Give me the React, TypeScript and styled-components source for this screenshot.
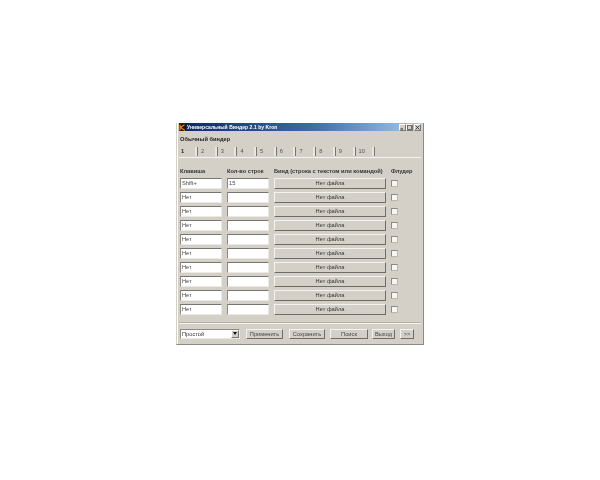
import React from 'react';
import styled, { createGlobalStyle } from 'styled-components';

const Global = createGlobalStyle`
  html, body { margin: 0; height: 100%; background: #fff; }
  #root { height: 100%; }
`;

const Desktop = styled.div`
  width: 600px;
  height: 480px;
  padding: 123px 0 0 176px;
  box-sizing: border-box;
  overflow: hidden;
`;

const Win = styled.div`
  width: 248px;
  height: 222px;
  box-sizing: border-box;
  background: #d4d0c8;
  border: 1px solid #8c8a84;
  border-top: 0;
  border-left-color: #d4d0c8;
  box-shadow: inset 1px 0 0 #fff;
  padding: 0 2px 2px 2px;
  display: flex;
  flex-direction: column;
  font-family: 'Liberation Sans', Arial, sans-serif;
  font-size: 5.7px;
  color: #222;
  filter: blur(0.4px);
`;

const TitleBar = styled.div`
  height: 8px;
  flex: none;
  background: linear-gradient(90deg, #0a246a 0%, #3a6ea5 55%, #a6caf0 100%);
  display: flex;
  align-items: center;
  color: #fff;
  font-weight: bold;
  font-size: 5px;
  padding: 0;
  gap: 1px;
`;

const TitleText = styled.span`
  flex: 1;
  white-space: nowrap;
  letter-spacing: 0.05px;
`;

const CaptionBtn = styled.span<{ $gap?: boolean }>`
  width: 7px;
  height: 7px;
  box-sizing: border-box;
  background: #d4d0c8;
  border: 1px solid #777;
  border-top-color: #fff;
  border-left-color: #fff;
  margin-left: ${(p) => (p.$gap ? '1px' : '0')};
  display: flex;
  align-items: center;
  justify-content: center;
  flex: none;
`;

const Captions = styled.div`
  display: flex;
`;

const GroupTitle = styled.div`
  font-weight: bold;
  height: 7px;
  line-height: 7px;
  margin: 5px 0 0 1px;
  flex: none;
`;

const Tabs = styled.div`
  display: flex;
  margin: 4px 0 0 0;
  height: 10px;
  flex: none;
`;

const Tab = styled.div<{ $active?: boolean }>`
  width: ${(p) => (p.$active ? '19px' : '19.7px')};
  box-sizing: border-box;
  padding-left: ${(p) => (p.$active ? '2px' : '3px')};
  line-height: 8px;
  height: 9px;
  font-weight: ${(p) => (p.$active ? 'bold' : 'normal')};
  color: ${(p) => (p.$active ? '#222' : '#555')};
  border-right: 1px solid #77756f;
  box-shadow: inset -2px 0 0 #e9e7e2;
`;

const TabBody = styled.div`
  flex: 1;
  border-top: 1px solid #f4f3ef;
  padding: 10px 0 0 1px;
`;

const Grid = styled.div`
  display: grid;
  grid-template-columns: 42px 42px 112px 12px;
  column-gap: 5px;
  grid-auto-rows: 14px;
  grid-template-rows: 10px;
`;

const Head = styled.div`
  font-weight: bold;
  color: #333;
  line-height: 7px;
  height: 10px;
  white-space: nowrap;
`;

const Field = styled.div`
  height: 11px;
  box-sizing: border-box;
  background: #fff;
  border: 1px solid #a7a59f;
  border-top-color: #77756f;
  border-left-color: #8c8a84;
  border-right-color: #ebe9e4;
  border-bottom-color: #ebe9e4;
  padding-left: 1px;
  line-height: 9px;
  color: #444;
  white-space: nowrap;
`;

const Bind = styled.div`
  height: 11px;
  box-sizing: border-box;
  background: #d4d0c8;
  border: 1px solid #6e6c66;
  border-top-color: #f4f3ef;
  border-left-color: #f4f3ef;
  text-align: center;
  line-height: 9px;
  color: #333;
`;

const Check = styled.div`
  width: 7px;
  height: 7px;
  margin: 2px 0 0 0;
  background: #f6f5f2;
  border: 1px solid #b9b6af;
  border-top-color: #8c8a84;
  border-left-color: #8c8a84;
  box-sizing: border-box;
`;

const Footer = styled.div`
  flex: none;
  border-top: 1px solid #b4b1a9;
  box-shadow: inset 0 1px 0 #f4f3ef;
  height: 20px;
  display: flex;
  align-items: center;
  padding: 2px 0 0 1px;
  box-sizing: border-box;
`;

const Select = styled.div`
  width: 60px;
  height: 10px;
  box-sizing: border-box;
  background: #fff;
  border: 1px solid #8c8a84;
  border-right-color: #ebe9e4;
  border-bottom-color: #ebe9e4;
  display: flex;
  justify-content: space-between;
  padding-left: 1px;
  line-height: 8px;
  color: #333;
  margin-right: 6px;
  flex: none;
`;

const Arrow = styled.span`
  width: 8px;
  background: #d4d0c8;
  border: 1px solid #777;
  border-top-color: #fff;
  border-left-color: #fff;
  box-sizing: border-box;
  display: flex;
  align-items: center;
  justify-content: center;
`;

const Btn = styled.div<{ $w: number; $gap: number }>`
  width: ${(p) => p.$w}px;
  margin-right: ${(p) => p.$gap}px;
  height: 10px;
  box-sizing: border-box;
  background: #d4d0c8;
  border: 1px solid #6e6c66;
  border-top-color: #f4f3ef;
  border-left-color: #f4f3ef;
  text-align: center;
  line-height: 8px;
  color: #444;
  flex: none;
`;

const rows = Array.from({ length: 10 }, (_, i) => i);
const tabs = [2, 3, 4, 5, 6, 7, 8, 9, 10];

export default function App() {
  return (
    <Desktop>
      <Global />
      <Win>
        <TitleBar>
          <svg width="7" height="7" viewBox="0 0 7 7">
            <rect width="7" height="7" fill="#1a1208" />
            <path d="M1 0.5V6.5M1.5 3.5L5.5 0.8M1.5 3.5L6 6.5" stroke="#f08a10" strokeWidth="1.2" fill="none" />
          </svg>
          <TitleText>Универсальный Биндер 2.1 by Kron</TitleText>
          <Captions>
            <CaptionBtn>
              <svg width="5" height="5" viewBox="0 0 5 5">
                <path d="M0.5 4H3" stroke="#222" />
              </svg>
            </CaptionBtn>
            <CaptionBtn>
              <svg width="5" height="5" viewBox="0 0 5 5">
                <rect x="0.5" y="0.5" width="4" height="4" fill="none" stroke="#444" strokeWidth="0.7" />
              </svg>
            </CaptionBtn>
            <CaptionBtn $gap>
              <svg width="5" height="5" viewBox="0 0 5 5">
                <path d="M0.5 0.5L4.5 4.5M4.5 0.5L0.5 4.5" stroke="#222" strokeWidth="0.8" />
              </svg>
            </CaptionBtn>
          </Captions>
        </TitleBar>
        <GroupTitle>Обычный биндер</GroupTitle>
        <Tabs>
          <Tab $active>1</Tab>
          {tabs.map((t) => (
            <Tab key={t}>{t}</Tab>
          ))}
        </Tabs>
        <TabBody>
          <Grid>
            <Head>Клавиша</Head>
            <Head>Кол-во строк</Head>
            <Head>Бинд (строка с текстом или командой)</Head>
            <Head>Флудер</Head>
            {rows.map((i) => (
              <React.Fragment key={i}>
                <Field>{i === 0 ? 'Shift+' : 'Нет'}</Field>
                <Field>{i === 0 ? '15' : ''}</Field>
                <Bind>Нет файла</Bind>
                <Check />
              </React.Fragment>
            ))}
          </Grid>
        </TabBody>
        <Footer>
          <Select>
            Простой
            <Arrow>
              <svg width="4" height="3" viewBox="0 0 4 3">
                <path d="M0 0H4L2 3Z" fill="#111" />
              </svg>
            </Arrow>
          </Select>
          <Btn $w={37} $gap={6}>Применить</Btn>
          <Btn $w={36} $gap={5}>Сохранить</Btn>
          <Btn $w={38} $gap={4}>Поиск</Btn>
          <Btn $w={23} $gap={5}>Выход</Btn>
          <Btn $w={14} $gap={0}>&gt;&gt;</Btn>
        </Footer>
      </Win>
    </Desktop>
  );
}
